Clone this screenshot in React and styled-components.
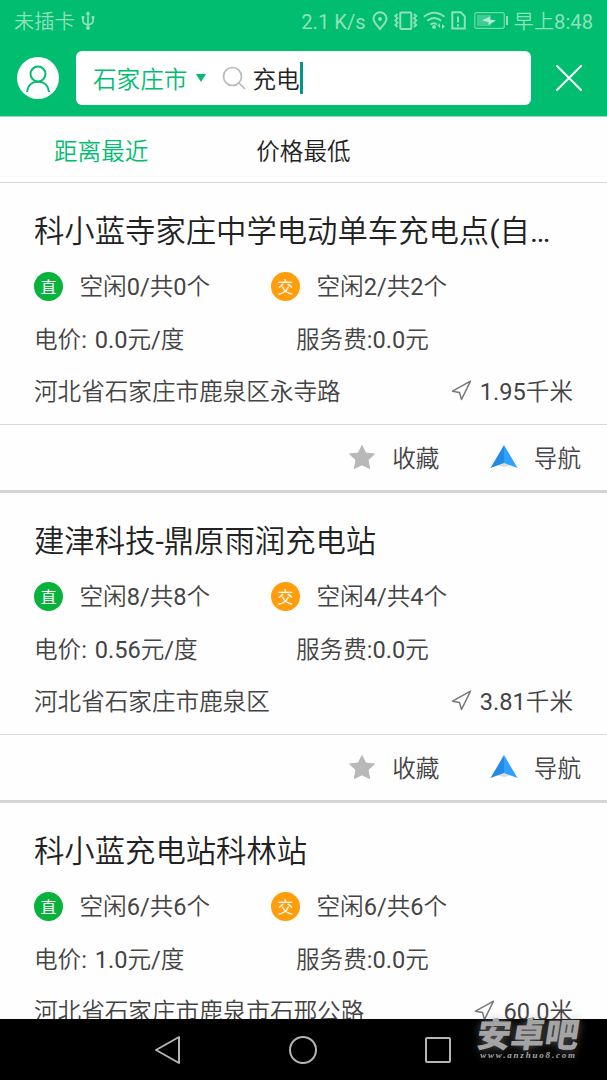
import React from "react";
import styled, { createGlobalStyle } from "styled-components";

const GlobalStyle = createGlobalStyle`
  * {
    box-sizing: border-box;
  }

  body {
    margin: 0;
    background-color: #fefefe;
    font-family: Roboto, "Noto Sans CJK SC DemiLight", "Noto Sans CJK SC", sans-serif;
    overflow: hidden;
  }

  svg {
    display: block;
    flex-shrink: 0;
  }
`;

const Screen = styled.div`
  display: flex;
  flex-direction: column;
  width: 607px;
  height: 1080px;
  overflow: hidden;
`;

const Header = styled.header`
  flex: none;
  height: 117px;
  background-color: #00bd70;
  border-bottom: 1px solid #8fdfbd;
`;

const StatusBar = styled.div`
  display: flex;
  align-items: center;
  justify-content: space-between;
  height: 42px;
  padding: 0 14px;
  font-size: 20.2px;
  line-height: 30px;
  color: #8fe0bd;
`;

const StatusGroup = styled.div`
  display: flex;
  align-items: center;
  gap: ${(props) => props.$gap};

  & > span {
    padding-top: 1px;
  }
`;

const SearchRow = styled.div`
  display: flex;
  align-items: center;
  height: 54px;
  margin-top: 9px;
  padding: 0 25px 0 17px;
`;

const Avatar = styled.div`
  display: flex;
  justify-content: center;
  width: 42px;
  height: 42px;
  padding-top: 8px;
  border-radius: 50%;
  background-color: #fff;
`;

const SearchBox = styled.div`
  display: flex;
  align-items: center;
  width: 455px;
  height: 54px;
  margin: 0 25px 0 17px;
  padding-left: 17px;
  border-radius: 6px;
  background-color: #fff;
  font-size: 23.6px;
  line-height: 34px;
`;

const City = styled.span`
  padding-top: 4px;
  color: #00bd70;
`;

const Arrow = styled.span`
  margin: 0 16px 1px 9px;
  border: 5px solid transparent;
  border-top: 8px solid #00bd70;
  border-bottom: none;
`;

const Query = styled.span`
  margin-left: 6px;
  padding-top: 4px;
  color: #222;
`;

const Caret = styled.span`
  width: 3px;
  height: 32px;
  background-color: #009688;
`;

const Tabs = styled.nav`
  display: flex;
  flex: none;
  height: 66px;
  border-bottom: 1px solid #d6d6d6;
`;

const Tab = styled.div`
  width: 202.3px;
  padding-top: 2px;
  font-size: 23.6px;
  line-height: 66px;
  text-align: center;
  color: ${(props) => (props.$active ? "#00bd70" : "#222")};
`;

const List = styled.main`
  flex: 1;
  min-height: 0;
  overflow: hidden;
`;

const Card = styled.section`
  height: 310px;
  padding-top: 22px;
  border-bottom: 3px solid #d5d5d5;
  font-size: 23.6px;
  color: #444;
`;

const Title = styled.h2`
  height: 56px;
  margin: 0 34px;
  font-size: 30.35px;
  font-weight: 400;
  line-height: 54px;
  white-space: nowrap;
  color: #222;
`;

const Row = styled.div`
  display: grid;
  grid-template-columns: ${(props) => props.$columns};
  align-items: center;
  height: 52.5px;
  padding: 0 34px;
  line-height: 52px;
  white-space: nowrap;
  word-spacing: 2px;
`;

const Slot = styled.div`
  display: flex;
  align-items: center;
`;

const Badge = styled.span`
  width: 29px;
  height: 29px;
  margin: 0 16.5px 2px 0;
  border-radius: 50%;
  background-color: ${(props) => props.$color};
  font-family: "Noto Sans CJK SC", sans-serif;
  font-size: 16px;
  line-height: 29px;
  text-align: center;
  color: #fff;
`;

const Distance = styled.div`
  display: flex;
  align-items: center;
  gap: 8px;

  & > svg {
    margin-bottom: 3px;
  }
`;

const Actions = styled.div`
  display: flex;
  justify-content: flex-end;
  height: 66px;
  margin-top: 5px;
  padding-right: 26px;
  border-top: 1px solid #d9d9d9;
  line-height: 66px;
`;

const Action = styled.div`
  display: flex;
  align-items: center;
  gap: 16px;
  margin-left: 50.5px;

  & > span {
    padding-top: 4px;
  }
`;

const NavBar = styled.footer`
  position: relative;
  display: flex;
  flex: none;
  align-items: center;
  justify-content: center;
  gap: 108px;
  height: 61px;
  padding-right: 2px;
  background-color: #000;
`;

const Watermark = styled.div`
  position: absolute;
  top: -3px;
  right: 26px;
  width: 105px;
  color: #a4a4a4;
  text-align: center;
  text-shadow: 0 0 8px rgba(150, 150, 150, 0.6);

  & > p {
    margin: 0;
    font-family: "Noto Sans CJK SC", sans-serif;
    font-size: 34px;
    font-weight: 900;
    line-height: 34px;
    transform: skewX(-9deg);
  }

  & > small {
    display: block;
    font: italic bold 9px/10px "Liberation Serif", serif;
    letter-spacing: 1.8px;
    white-space: nowrap;
  }
`;

const stations = [
  {
    name: "科小蓝寺家庄中学电动单车充电点(自…",
    dc: "空闲0/共0个",
    ac: "空闲2/共2个",
    price: "电价: 0.0元/度",
    address: "河北省石家庄市鹿泉区永寺路",
    distance: "1.95千米",
  },
  {
    name: "建津科技-鼎原雨润充电站",
    dc: "空闲8/共8个",
    ac: "空闲4/共4个",
    price: "电价: 0.56元/度",
    address: "河北省石家庄市鹿泉区",
    distance: "3.81千米",
  },
  {
    name: "科小蓝充电站科林站",
    dc: "空闲6/共6个",
    ac: "空闲6/共6个",
    price: "电价: 1.0元/度",
    address: "河北省石家庄市鹿泉市石邢公路",
    distance: "60.0米",
  },
];

const UsbIcon = () => (
  <svg width="14" height="20" viewBox="0 0 14 20" fill="none" stroke="currentColor" strokeWidth="1.7">
    <path d="M7 3v13M2 6v4.500q0 2 5 3.500M12 7v3.500q0 2-5 3.500" />
    <path d="M7 0l2.500 3.500h-5zM.7 5h2.600v3H.7zM10.700 5h2.600v3h-2.600z" fill="currentColor" stroke="none" />
    <circle cx="7" cy="17" r="2" fill="currentColor" stroke="none" />
  </svg>
);

const StatusIcons = () => (
  <svg width="138" height="22" viewBox="371 10 138 22" fill="none" stroke="currentColor" strokeWidth="2">
    <path d="M380 29c-3.500-4.200-6.500-7-6.500-10.300a6.500 6.500 0 0 1 13 0c0 3.300-3 6.100-6.500 10.300z" />
    <circle cx="380" cy="19" r="2" fill="currentColor" stroke="none" />
    <rect x="400.300" y="12.500" width="11" height="16.500" rx="1" />
    <path d="M397.500 14l-2.300 2 2.300 2.200-2.300 2.300 2.300 2.300-2.300 2.200 2.300 2M414 14l2.300 2-2.300 2.200 2.300 2.300-2.300 2.300 2.300 2.200-2.300 2" strokeWidth="1.800" />
    <path d="M424 16.700q10-8 20.500 0M427.200 20.800q7-5.500 14 0M430.500 24.500q3.600-2.600 6.500 0" />
    <circle cx="434" cy="27" r="2" fill="currentColor" stroke="none" />
    <path d="M440 23v5l-2.500-2.500zM442 24v5l3-2.500z" fill="currentColor" stroke="none" />
    <path d="M452.300 12.300h8.500l4 4v12.200h-12.500z" />
    <path d="M458 16.500v6M458 24.200v2.200" />
    <rect x="474.800" y="12.700" width="29.500" height="15.600" rx="2" strokeWidth="1.200" opacity=".8" />
    <rect x="477" y="15" width="14" height="11" fill="currentColor" stroke="none" opacity=".45" />
    <path d="M482 20.500l8-4v3l6 1-7.500 4.500v-3z" fill="#b5ecd5" stroke="none" />
    <path d="M507 16v9" />
  </svg>
);

const UserIcon = () => (
  <svg width="26" height="28" viewBox="0 0 26 28" fill="none" stroke="#00bd70" strokeWidth="2">
    <circle cx="13" cy="9" r="7.500" />
    <path d="M2 27c.5-5.500 4-10.300 11-10.300S23.500 21.500 24 27" />
  </svg>
);

const SearchIcon = () => (
  <svg width="24" height="24" viewBox="0 0 24 24" fill="none" stroke="#b9b9b9" strokeWidth="1.700">
    <circle cx="10.500" cy="10.500" r="9" />
    <path d="M17 17l6 6" />
  </svg>
);

const CloseIcon = () => (
  <svg width="26" height="26" viewBox="0 0 26 26" stroke="#fff" strokeWidth="2" strokeLinecap="round">
    <path d="M1 1l24 24M25 1L1 25" />
  </svg>
);

const ArrowIcon = () => (
  <svg width="21" height="21" viewBox="0 0 21 21" fill="none" stroke="#777" strokeLinejoin="round">
    <path d="M1.500 11.200L19.500 1.200 10.500 19.500 8.500 12.500z" strokeWidth="1.500" />
  </svg>
);

const StarIcon = () => (
  <svg width="28" height="26" viewBox="0 0 28 26">
    <path
      d="M14 1.500l3.700 7.500 8.800 1-6.500 6 1.700 8.500-7.700-3.700L6.300 24.500 8 16l-6.500-6 8.800-1z"
      fill="#b8b8b8"
      stroke="#b8b8b8"
      strokeLinejoin="round"
    />
  </svg>
);

const NavigateIcon = () => (
  <svg width="28" height="26" viewBox="0 0 28 26">
    <path d="M6 21l8-4 8 4-8 2z" fill="#ddd" />
    <path d="M14 1L.5 24 14 19z" fill="#2488e5" />
    <path d="M14 1l13.500 23L14 19z" fill="#2da2ff" />
  </svg>
);

const StationCard = ({ station }) => (
  <Card>
    <Title>{station.name}</Title>
    <Row $columns="237px 1fr">
      <Slot>
        <Badge $color="#08b33c">直</Badge>
        {station.dc}
      </Slot>
      <Slot>
        <Badge $color="#ff9d0a">交</Badge>
        {station.ac}
      </Slot>
    </Row>
    <Row $columns="262px 1fr">
      <span>{station.price}</span>
      <span>服务费:0.0元</span>
    </Row>
    <Row $columns="1fr auto">
      <span>{station.address}</span>
      <Distance>
        <ArrowIcon />
        {station.distance}
      </Distance>
    </Row>
    <Actions>
      <Action>
        <StarIcon />
        <span>收藏</span>
      </Action>
      <Action>
        <NavigateIcon />
        <span>导航</span>
      </Action>
    </Actions>
  </Card>
);

const App = () => {
  return (
    <Screen>
      <GlobalStyle />
      <Header>
        <StatusBar>
          <StatusGroup $gap="6px">
            <span>未插卡</span>
            <UsbIcon />
          </StatusGroup>
          <StatusGroup $gap="5px">
            <span>2.1 K/s</span>
            <StatusIcons />
            <span>早上8:48</span>
          </StatusGroup>
        </StatusBar>
        <SearchRow>
          <Avatar>
            <UserIcon />
          </Avatar>
          <SearchBox>
            <City>石家庄市</City>
            <Arrow />
            <SearchIcon />
            <Query>充电</Query>
            <Caret />
          </SearchBox>
          <CloseIcon />
        </SearchRow>
      </Header>
      <Tabs>
        <Tab $active>距离最近</Tab>
        <Tab>价格最低</Tab>
      </Tabs>
      <List>
        {stations.map((station) => (
          <StationCard key={station.name} station={station} />
        ))}
      </List>
      <NavBar>
        <svg width="27" height="30" viewBox="0 0 27 30" fill="none" stroke="#b5b5b5" strokeWidth="2" strokeLinejoin="round">
          <path d="M25 2v26L2 15z" />
        </svg>
        <svg width="28" height="28" viewBox="0 0 28 28" fill="none" stroke="#b5b5b5" strokeWidth="2">
          <circle cx="14" cy="14" r="13" />
        </svg>
        <svg width="26" height="26" viewBox="0 0 26 26" fill="none" stroke="#b5b5b5" strokeWidth="2">
          <rect x="1" y="1" width="24" height="24" rx="1" />
        </svg>
        <Watermark>
          <p>安卓吧</p>
          <small>www.anzhuo8.com</small>
        </Watermark>
      </NavBar>
    </Screen>
  );
};

export default App;
